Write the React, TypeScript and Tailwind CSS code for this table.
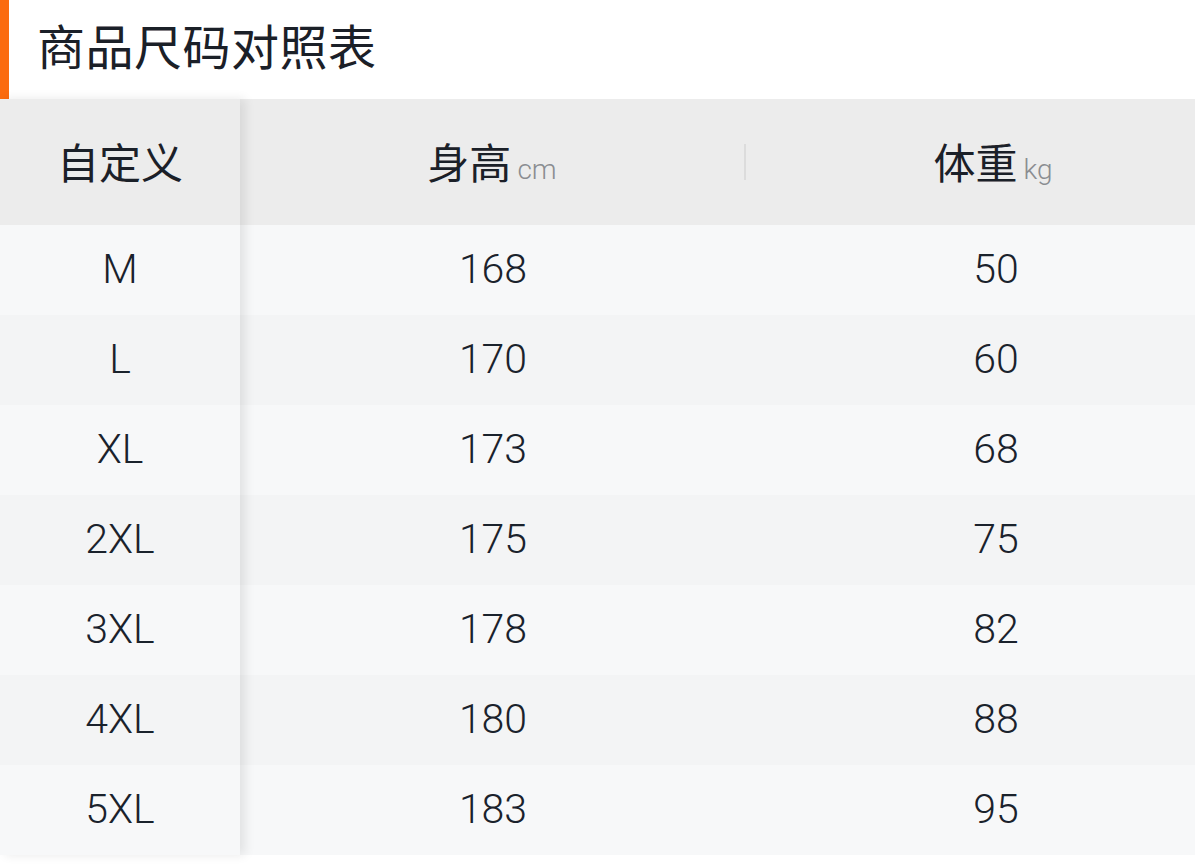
import React from "react";

const rows = [
  { size: "M", height: "168", weight: "50" },
  { size: "L", height: "170", weight: "60" },
  { size: "XL", height: "173", weight: "68" },
  { size: "2XL", height: "175", weight: "75" },
  { size: "3XL", height: "178", weight: "82" },
  { size: "4XL", height: "180", weight: "88" },
  { size: "5XL", height: "183", weight: "95" },
];

const cjk = { fontFamily: '"Noto Sans CJK SC", "Noto Sans", sans-serif' };
const latin = { fontFamily: 'Roboto, "Liberation Sans", Arial, sans-serif' };

const rowBg = (i: number) => (i % 2 === 0 ? "bg-[#f7f8f9]" : "bg-[#f3f4f5]");

export default function App() {
  return (
    <div className="w-[1195px] h-[868px] bg-white overflow-hidden">
      {/* Title */}
      <div className="flex h-[99px]">
        <div className="w-[9px] h-full bg-[#fb6b0f]" />
        <h1
          className="pl-[28px] pb-3 flex items-center text-[48px] leading-none text-[#1b2028] tracking-[0.5px]"
          style={cjk}
        >
          商品尺码对照表
        </h1>
      </div>

      {/* Table */}
      <div className="flex">
        {/* Fixed first column */}
        <div className="relative z-10 w-[240px] shrink-0 shadow-[5px_0_10px_rgba(0,0,0,0.09)]">
          <div
            className="h-[126px] pb-1 flex items-center justify-center bg-[#ececec] text-[42px] text-[#1b2028]"
            style={cjk}
          >
            自定义
          </div>
          {rows.map((r, i) => (
            <div
              key={r.size}
              className={`h-[90px] flex items-center justify-center text-[41px] font-light text-[#1a222c] ${rowBg(i)}`}
              style={latin}
            >
              {r.size}
            </div>
          ))}
        </div>

        {/* Scrollable columns */}
        <div className="flex-1 overflow-hidden">
          <div className="w-[1010px]">
            <div className="h-[126px] flex items-center bg-[#ececec]">
              <div className="w-[504px] flex items-baseline justify-center text-[#1b2028]">
                <span className="text-[42px] leading-none" style={cjk}>
                  身高
                </span>
                <span className="ml-[6px] text-[28px] leading-none font-light text-[#8a8d91]" style={latin}>
                  cm
                </span>
              </div>
              <div className="w-[2px] h-[36px] bg-[#dcdcdc]" />
              <div className="w-[494px] flex items-baseline justify-center text-[#1b2028]">
                <span className="text-[42px] leading-none" style={cjk}>
                  体重
                </span>
                <span className="ml-[6px] text-[28px] leading-none font-light text-[#8a8d91]" style={latin}>
                  kg
                </span>
              </div>
            </div>
            {rows.map((r, i) => (
              <div
                key={r.size}
                className={`h-[90px] flex items-center text-[41px] font-light text-[#1a222c] ${rowBg(i)}`}
                style={latin}
              >
                <div className="w-[506px] text-center">{r.height}</div>
                <div className="w-[500px] text-center">{r.weight}</div>
              </div>
            ))}
          </div>
        </div>
      </div>
    </div>
  );
}
